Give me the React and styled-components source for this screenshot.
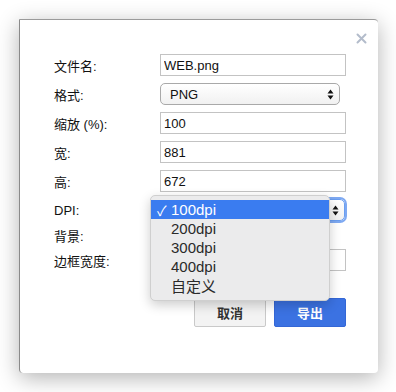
import React from "react";
import styled, { createGlobalStyle } from "styled-components";

const Global = createGlobalStyle`
  html, body { margin: 0; padding: 0; background: #ffffff; }
  body { font-family: "Liberation Sans", "Noto Sans CJK SC", Arial, sans-serif; color: #1a1a1a; }
  * { box-sizing: border-box; }
`;

const Page = styled.div`
  width: 396px;
  height: 392px;
  padding: 19px 0 0 19px;
`;

const Dialog = styled.div`
  position: relative;
  width: 359px;
  height: 354px;
  background: #fff;
  border-top: 1px solid #9a9a9a;
  border-left: 1px solid #8a8a8a;
  border-radius: 0 4px 4px 4px;
  box-shadow: 0 5px 22px rgba(0, 0, 0, 0.3);
  padding: 34px 32px 0 34px;
`;

const Close = styled.div`
  position: absolute;
  top: 12px;
  right: 11px;
  width: 12px;
  height: 12px;
  display: flex;
  align-items: center;
  justify-content: center;
`;

const Form = styled.div`
  display: grid;
  grid-template-columns: 106px 186px;
  grid-template-rows: repeat(6, 22px) 14px 22px;
  row-gap: 7px;
  align-items: center;
`;

const Label = styled.div`
  font-size: 13px;
  color: #111;
  height: 100%;
  display: flex;
  align-items: center;
`;

const Input = styled.input`
  width: 186px;
  height: 22px;
  border: 1px solid #c3c3c3;
  background: #fff;
  font-family: "Liberation Sans", "Noto Sans CJK SC", Arial, sans-serif;
  font-size: 13px;
  color: #111;
  padding: 0 0 0 3px;
  outline: none;
  margin: 0;
`;

const Select = styled.div`
  position: relative;
  width: ${(p) => (p.$focus ? "185px" : "180px")};
  height: 22px;
  border: 1px solid ${(p) => (p.$focus ? "#6a9ef0" : "#a9a9a9")};
  border-radius: 5px;
  background: linear-gradient(#ffffff, #f1f1f1);
  box-shadow: ${(p) => (p.$focus ? "0 0 0 2px #7ea9f2" : "none")};
  font-size: 13px;
  color: #111;
  display: flex;
  align-items: center;
  padding-left: 9px;
`;

const Arrows = styled.svg`
  position: absolute;
  right: 5px;
  top: 5px;
`;

const Spacer = styled.div`
  height: 14px;
`;

const Menu = styled.div`
  position: absolute;
  left: -11px;
  top: -5px;
  width: 180px;
  padding: 4px 0 5px;
  background: #ebebec;
  border: 1px solid #cfcfcf;
  border-radius: 5px;
  box-shadow: 0 4px 12px rgba(0, 0, 0, 0.2);
  z-index: 5;
`;

const MenuItem = styled.div`
  height: 19px;
  display: flex;
  align-items: center;
  font-size: 15px;
  color: ${(p) => (p.$active ? "#fff" : "#2a2a2a")};
  background: ${(p) => (p.$active ? "#3a7cf0" : "transparent")};
  padding-left: 6px;
`;

const Check = styled.span`
  width: 14px;
  font-size: 14px;
  display: inline-block;
`;

const Buttons = styled.div`
  display: flex;
  justify-content: flex-end;
  gap: 8px;
  margin-top: 27px;
  width: 292px;
`;

const Button = styled.button`
  width: 72px;
  height: 29px;
  border-radius: 2px;
  font-family: "Liberation Sans", "Noto Sans CJK SC", Arial, sans-serif;
  font-size: 13px;
  font-weight: bold;
  border: 1px solid ${(p) => (p.$primary ? "#3467d6" : "#c9c9c9")};
  background: ${(p) => (p.$primary ? "#3b72e2" : "#f3f3f3")};
  color: ${(p) => (p.$primary ? "#fff" : "#333")};
  padding: 0;
`;

const UpDown = () => (
  <Arrows width="7" height="11" viewBox="0 0 7 11">
    <path d="M3.5 0.5 L6.5 4.5 L0.5 4.5 Z" fill="#111" />
    <path d="M3.5 10.5 L6.5 6.5 L0.5 6.5 Z" fill="#111" />
  </Arrows>
);

export default function App() {
  const opts = ["100dpi", "200dpi", "300dpi", "400dpi", "自定义"];
  return (
    <>
      <Global />
      <Page>
        <Dialog>
          <Close>
            <svg width="11" height="11" viewBox="0 0 11 11">
              <path d="M1.5 1.5 L9.5 9.5 M9.5 1.5 L1.5 9.5" stroke="#b3bccb" strokeWidth="2" strokeLinecap="round" />
            </svg>
          </Close>
          <Form>
            <Label>文件名:</Label>
            <Input readOnly value="WEB.png" />
            <Label>格式:</Label>
            <Select>
              PNG
              <UpDown />
            </Select>
            <Label>缩放 (%):</Label>
            <Input readOnly value="100" />
            <Label>宽:</Label>
            <Input readOnly value="881" />
            <Label>高:</Label>
            <Input readOnly value="672" />
            <Label>DPI:</Label>
            <Select $focus>
              <UpDown />
              <Menu>
                {opts.map((o, i) => (
                  <MenuItem key={o} $active={i === 0}>
                    <Check>{i === 0 ? "✓" : ""}</Check>
                    {o}
                  </MenuItem>
                ))}
              </Menu>
            </Select>
            <Label>背景:</Label>
            <Spacer />
            <Label>边框宽度:</Label>
            <Input readOnly value="" />
          </Form>
          <Buttons>
            <Button>取消</Button>
            <Button $primary>导出</Button>
          </Buttons>
        </Dialog>
      </Page>
    </>
  );
}
